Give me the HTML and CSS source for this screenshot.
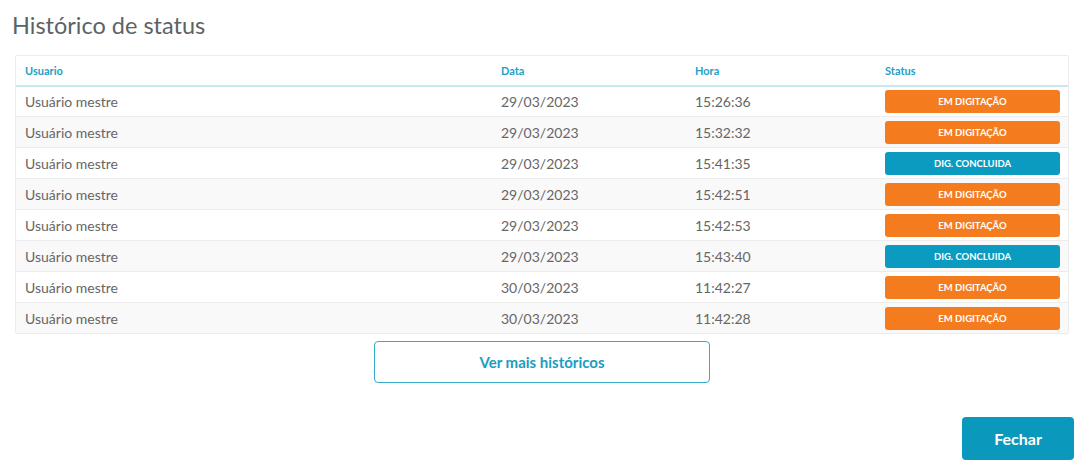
FILE: index.html
```html
<!DOCTYPE html>
<html>
<head>
    <title>Histórico de status</title>
    <link rel="stylesheet" href="styles.css">
</head>
<body>
    <div class="modal">
        <h2 class="modal-title">Histórico de status</h2>
        <div class="table-box">
            <table class="status-table">
                <colgroup>
                    <col class="col-user">
                    <col class="col-date">
                    <col class="col-time">
                    <col>
                </colgroup>
                <thead>
                    <tr>
                        <th>Usuario</th>
                        <th>Data</th>
                        <th>Hora</th>
                        <th>Status</th>
                    </tr>
                </thead>
                <tbody>
                    <tr>
                        <td>Usuário mestre</td>
                        <td>29/03/2023</td>
                        <td>15:26:36</td>
                        <td><span class="badge badge-orange">EM DIGITAÇÃO</span></td>
                    </tr>
                    <tr>
                        <td>Usuário mestre</td>
                        <td>29/03/2023</td>
                        <td>15:32:32</td>
                        <td><span class="badge badge-orange">EM DIGITAÇÃO</span></td>
                    </tr>
                    <tr>
                        <td>Usuário mestre</td>
                        <td>29/03/2023</td>
                        <td>15:41:35</td>
                        <td><span class="badge badge-blue">DIG. CONCLUIDA</span></td>
                    </tr>
                    <tr>
                        <td>Usuário mestre</td>
                        <td>29/03/2023</td>
                        <td>15:42:51</td>
                        <td><span class="badge badge-orange">EM DIGITAÇÃO</span></td>
                    </tr>
                    <tr>
                        <td>Usuário mestre</td>
                        <td>29/03/2023</td>
                        <td>15:42:53</td>
                        <td><span class="badge badge-orange">EM DIGITAÇÃO</span></td>
                    </tr>
                    <tr>
                        <td>Usuário mestre</td>
                        <td>29/03/2023</td>
                        <td>15:43:40</td>
                        <td><span class="badge badge-blue">DIG. CONCLUIDA</span></td>
                    </tr>
                    <tr>
                        <td>Usuário mestre</td>
                        <td>30/03/2023</td>
                        <td>11:42:27</td>
                        <td><span class="badge badge-orange">EM DIGITAÇÃO</span></td>
                    </tr>
                    <tr>
                        <td>Usuário mestre</td>
                        <td>30/03/2023</td>
                        <td>11:42:28</td>
                        <td><span class="badge badge-orange">EM DIGITAÇÃO</span></td>
                    </tr>
                </tbody>
            </table>
        </div>
        <div class="more-row">
            <button class="btn-outline" type="button">Ver mais históricos</button>
        </div>
        <div class="footer">
            <button class="btn-primary" type="button">Fechar</button>
        </div>
    </div>
</body>
</html>
```

FILE: styles.css
```css
body {
    margin: 0;
    background: #fff;
    font-family: Lato, "Open Sans", sans-serif;
    color: #666;
}
.modal {
    padding: 11px 16px 0 15px;
}
.modal-title {
    margin: 0 0 15px -3px;
    font-size: 23.5px;
    font-weight: 400;
    line-height: 29px;
    color: #5b6367;
}
.table-box {
    border: 1px solid #ececec;
    border-radius: 2px;
    margin-right: 5px;
}
.status-table {
    width: 100%;
    border-collapse: collapse;
    table-layout: fixed;
}
.col-user {
    width: 476px;
}
.col-date {
    width: 194px;
}
.col-time {
    width: 190px;
}
.status-table th {
    height: 29px;
    padding: 0 8px 0 9px;
    text-align: left;
    font-size: 11px;
    font-weight: 700;
    color: #1e9fc6;
    border-bottom: 2px solid #c5e8f3;
}
.status-table td {
    height: 30px;
    padding: 0 8px 0 9px;
    font-size: 14px;
    color: #666;
    border-top: 1px solid #ececec;
}
.status-table tbody tr:first-child td {
    border-top: 0;
    height: 29px;
}
.status-table tbody tr:nth-child(even) {
    background: #f9f9f9;
}
.badge {
    display: block;
    height: 23px;
    line-height: 23px;
    border-radius: 3px;
    text-align: center;
    font-size: 9.5px;
    font-weight: 700;
    color: #fff;
}
.badge-orange {
    background: #f47c1e;
}
.badge-blue {
    background: #0b9bc0;
}
.more-row {
    display: flex;
    justify-content: center;
    padding-top: 7px;
    margin-right: 5px;
}
.btn-outline {
    width: 336px;
    height: 42px;
    background: #fff;
    border: 1px solid #3aaccb;
    border-radius: 4px;
    font-family: inherit;
    font-size: 15px;
    font-weight: 700;
    color: #1b9cc1;
}
.footer {
    display: flex;
    justify-content: flex-end;
    padding-top: 34px;
}
.btn-primary {
    width: 112px;
    height: 43px;
    background: #0b98bd;
    border: 0;
    border-radius: 4px;
    font-family: inherit;
    font-size: 16px;
    font-weight: 700;
    color: #fff;
}
```
